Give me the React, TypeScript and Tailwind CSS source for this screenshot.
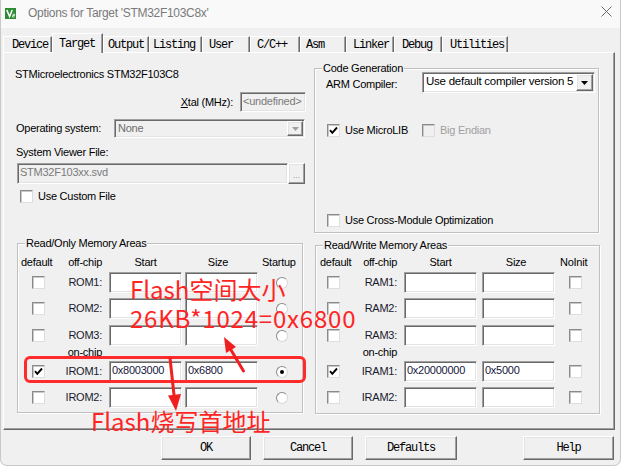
import React from "react";

const MONO = "font-['Liberation_Mono',monospace] text-[12px] tracking-[-1.2px]";
const SANS = "font-['Liberation_Sans',Arial,sans-serif]";
const sunken =
  "border border-t-[#a0a0a0] border-l-[#a0a0a0] border-r-white border-b-white shadow-[inset_1px_1px_0_#696969,inset_-1px_-1px_0_#e3e3e3]";
const raised =
  "border border-t-white border-l-white border-r-[#696969] border-b-[#696969] shadow-[inset_-1px_-1px_0_#a0a0a0,inset_1px_1px_0_#e3e3e3]";

function Check({ checked = false, disabled = false }: { checked?: boolean; disabled?: boolean }) {
  return (
    <span
      className={`flex items-center justify-center w-[13px] h-[13px] shrink-0 border border-t-[#8a8a8a] border-l-[#8a8a8a] border-r-[#dedede] border-b-[#dedede] shadow-[inset_1px_1px_0_#c8c8c8] ${
        disabled ? "bg-[#f0f0f0]" : "bg-white"
      }`}
    >
      {checked && (
        <svg width="9" height="9" viewBox="0 0 9 9">
          <path d="M1 4.2 L3.3 6.8 L8 1.5" fill="none" stroke="#000" strokeWidth="1.9" />
        </svg>
      )}
    </span>
  );
}

function Radio({ on = false }: { on?: boolean }) {
  return (
    <span className="flex items-center justify-center w-[12px] h-[12px] rounded-full bg-white border border-[#8a8a8a] border-r-[#d8d8d8] border-b-[#d8d8d8]">
      {on && <span className="block w-[4px] h-[4px] rounded-full bg-black" />}
    </span>
  );
}

function Field({ value = "", cls }: { value?: string; cls: string }) {
  return (
    <div className={`flex items-center pl-[2px] bg-white text-[#16163c] ${sunken} ${cls}`}>
      <span className="leading-[13px] -mt-[2px]">{value}</span>
    </div>
  );
}

function Legend({ children }: { children: React.ReactNode }) {
  return (
    <span className="absolute left-[7px] -top-[8px] px-[1px] bg-[#f0f0f0] leading-[14px]">{children}</span>
  );
}

const tabs = [
  { label: "Device", cls: "w-[49px] pl-[8px] h-[16px]" },
  { label: "Target", cls: "w-[51px] pl-[6px] h-[20px] -mb-[1px] bg-[#f0f0f0] z-10", sel: true },
  { label: "Output", cls: "w-[46px] pl-[4px] h-[16px]" },
  { label: "Listing", cls: "w-[53px] pl-[3px] h-[16px]" },
  { label: "User", cls: "w-[48px] pl-[6px] h-[16px]" },
  { label: "C/C++", cls: "w-[50px] pl-[6px] h-[16px]" },
  { label: "Asm", cls: "w-[46px] pl-[5px] h-[16px]" },
  { label: "Linker", cls: "w-[48px] pl-[6px] h-[16px]" },
  { label: "Debug", cls: "w-[48px] pl-[7px] h-[16px]" },
  { label: "Utilities", cls: "w-[66px] pl-[7px] h-[16px]" },
];

function RomRow({ label, start = "", size = "", checked = false, on = false }: { label: string; start?: string; size?: string; checked?: boolean; on?: boolean }) {
  return (
    <div className="flex items-center h-[21px]">
      <div className="w-[47px] pl-[14px]">
        <Check checked={checked} />
      </div>
      <div className="w-[37px] text-right text-[#1a1a2e]">{label}</div>
      <Field value={start} cls="ml-[7px] w-[73px] h-[21px]" />
      <Field value={size} cls="ml-[3px] w-[73px] h-[21px]" />
      <div className="ml-[18px]">
        <Radio on={on} />
      </div>
    </div>
  );
}

function RamRow({ label, start = "", size = "", checked = false }: { label: string; start?: string; size?: string; checked?: boolean }) {
  return (
    <div className="flex items-center h-[21px]">
      <div className="w-[44px] pl-[11px]">
        <Check checked={checked} />
      </div>
      <div className="w-[37px] text-right text-[#1a1a2e]">{label}</div>
      <Field value={start} cls="ml-[7px] w-[73px] h-[21px]" />
      <Field value={size} cls="ml-[5px] w-[73px] h-[21px]" />
      <div className="ml-[14px]">
        <Check />
      </div>
    </div>
  );
}

export default function App() {
  return (
    <div className={`relative w-[621px] h-[467px] bg-white overflow-hidden ${SANS} text-[11px] tracking-[-0.25px] text-black`}>
      <div className="w-[621px] h-[466px] bg-[#f0f0f0] rounded-b-[7px] border-b border-l border-r border-[#c8c8c8] flex flex-col">
        {/* Title bar */}
        <div className="h-[28px] bg-[#f9f9f9] flex items-start">
          <svg className="ml-[4px] mt-[8px]" width="11" height="11" viewBox="0 0 11 11">
            <rect width="11" height="11" fill="#2f8a35" />
            <path d="M1.8 2 L4.6 8.6 L7.2 2" fill="none" stroke="#fff" strokeWidth="1.5" />
            <path d="M7.6 6.2 h2 v1.3 h-2 v1.5 h2" fill="none" stroke="#fff" strokeWidth="0.8" />
          </svg>
          <span className="ml-[12px] mt-[5px] text-[12px] tracking-[-0.3px] leading-[16px] text-[#7a7a7a]">
            Options for Target 'STM32F103C8x'
          </span>
          <svg className="ml-auto mr-[8px] mt-[6px]" width="11" height="11" viewBox="0 0 11 11">
            <path d="M0.5 0.5 L10.5 10.5 M10.5 0.5 L0.5 10.5" stroke="#6a6a6a" strokeWidth="1" />
          </svg>
        </div>

        {/* Tabs */}
        <div className={`h-[24px] flex items-end pl-[2px] ${MONO}`}>
          {tabs.map((t) => (
            <div
              key={t.label}
              className={`relative flex items-center border-t border-l border-t-white border-l-white border-r border-r-[#696969] shadow-[inset_-1px_0_0_#a0a0a0] leading-[14px] text-black ${t.cls}`}
            >
              {t.label}
            </div>
          ))}
        </div>

        {/* Panel */}
        <div className="ml-[2px] w-[612px] h-[378px] flex border border-t-white border-l-white border-r-[#696969] border-b-[#696969] shadow-[inset_-1px_-1px_0_#a0a0a0]">
          {/* Left column */}
          <div className="w-[307px] flex flex-col">
            <div className="mt-[14px] ml-[11px] h-[14px] leading-[14px]">STMicroelectronics STM32F103C8</div>
            <div className="mt-[11px] h-[20px] flex items-center justify-end pr-[5px]">
              <span>
                <span className="underline">X</span>tal (MHz):
              </span>
              <div className={`ml-[7px] w-[66px] h-[20px] flex items-center pl-[2px] bg-[#f0f0f0] text-[#7a7a7a] ${sunken}`}>
                <span className="-mt-[2px]">&lt;undefined&gt;</span>
              </div>
            </div>
            <div className="mt-[7px] h-[19px] flex items-center">
              <span className="w-[110px] pl-[12px]">Operating system:</span>
              <div className={`w-[191px] h-[19px] flex items-center bg-[#f0f0f0] text-[#6d6d6d] ${sunken}`}>
                <span className="pl-[3px] flex-1">None</span>
                <span className={`w-[16px] h-[15px] mr-[1px] flex items-center justify-center bg-[#f0f0f0] ${raised}`}>
                  <svg width="7" height="4" viewBox="0 0 7 4">
                    <path d="M0 0 H7 L3.5 4 Z" fill="#a0a0a0" />
                  </svg>
                </span>
              </div>
            </div>
            <div className="mt-[7px] h-[14px] leading-[14px] pl-[12px]">System Viewer File:</div>
            <div className="mt-[4px] h-[21px] flex pl-[13px]">
              <div className={`w-[271px] h-[21px] flex items-center pl-[2px] bg-[#f0f0f0] text-[#7a7a7a] ${sunken}`}>
                <span className="-mt-[2px]">STM32F103xx.svd</span>
              </div>
              <div className={`w-[17px] h-[21px] flex items-end justify-center pb-[4px] text-[#a0a0a0] text-[9px] leading-[8px] ${raised}`}>
                ...
              </div>
            </div>
            <div className="mt-[6px] h-[13px] flex items-center pl-[16px] gap-[5px]">
              <Check />
              <span>Use Custom File</span>
            </div>

            {/* Read/Only Memory Areas */}
            <div className="relative mt-[40px] ml-[13px] w-[286px] h-[170px] border border-[#c0c0c0] shadow-[inset_1px_1px_0_#fff,1px_1px_0_#fff]">
              <Legend>Read/Only Memory Areas</Legend>
              <div className="mt-[11px] h-[14px] leading-[14px] flex">
                <span className="w-[47px] pl-[3px]">default</span>
                <span className="w-[37px] text-right">off-chip</span>
                <span className="ml-[7px] w-[73px] text-center">Start</span>
                <span className="ml-[3px] w-[66px] text-center">Size</span>
                <span className="ml-[11px]">Startup</span>
              </div>
              <div className="mt-[3px]">
                <RomRow label="ROM1:" />
              </div>
              <div className="mt-[5px]">
                <RomRow label="ROM2:" />
              </div>
              <div className="mt-[6px]">
                <RomRow label="ROM3:" />
              </div>
              <div className="h-[13px] leading-[13px] flex">
                <span className="w-[84px] text-right">on-chip</span>
              </div>
              <div className="mt-[2px]">
                <RomRow label="IROM1:" start="0x8003000" size="0x6800" checked on />
              </div>
              <div className="mt-[5px]">
                <RomRow label="IROM2:" />
              </div>
            </div>
          </div>

          {/* Right column */}
          <div className="flex-1 flex flex-col">
            <div className="relative mt-[15px] ml-[3px] w-[285px] h-[165px] border border-[#c0c0c0] shadow-[inset_1px_1px_0_#fff,1px_1px_0_#fff]">
              <Legend>Code Generation</Legend>
              <div className="mt-[3px] h-[21px] flex items-center pl-[11px]">
                <span className="w-[96px] mt-[3px]">ARM Compiler:</span>
                <div className={`w-[173px] h-[21px] flex items-center bg-white ${sunken}`}>
                  <span className="pl-[3px] flex-1 -mt-[2px] text-[11.5px]">Use default compiler version 5</span>
                  <span className={`w-[17px] h-[17px] mr-[1px] flex items-center justify-center bg-[#f0f0f0] ${raised}`}>
                    <svg width="7" height="4" viewBox="0 0 7 4">
                      <path d="M0 0 H7 L3.5 4 Z" fill="#000" />
                    </svg>
                  </span>
                </div>
              </div>
              <div className="mt-[31px] h-[13px] flex items-center pl-[12px]">
                <div className="w-[95px] flex items-center gap-[5px]">
                  <Check checked />
                  <span>Use MicroLIB</span>
                </div>
                <Check disabled />
                <span className="ml-[5px] text-[#a0a0a0]">
                  Bi<span className="underline">g</span> Endian
                </span>
              </div>
              <div className="mt-[77px] h-[13px] flex items-center pl-[12px] gap-[5px]">
                <Check />
                <span>Use Cross-Module Optimization</span>
              </div>
            </div>

            {/* Read/Write Memory Areas */}
            <div className="relative mt-[12px] ml-[4px] w-[285px] h-[169px] border border-[#c0c0c0] shadow-[inset_1px_1px_0_#fff,1px_1px_0_#fff]">
              <Legend>Read/Write Memory Areas</Legend>
              <div className="mt-[9px] h-[14px] leading-[14px] flex">
                <span className="w-[44px] pl-[4px]">default</span>
                <span className="w-[37px] text-right">off-chip</span>
                <span className="ml-[7px] w-[73px] text-center">Start</span>
                <span className="ml-[5px] w-[68px] text-center">Size</span>
                <span className="ml-[10px]">NoInit</span>
              </div>
              <div className="mt-[3px]">
                <RamRow label="RAM1:" />
              </div>
              <div className="mt-[5px]">
                <RamRow label="RAM2:" />
              </div>
              <div className="mt-[6px]">
                <RamRow label="RAM3:" />
              </div>
              <div className="h-[13px] leading-[13px] flex">
                <span className="w-[81px] text-right">on-chip</span>
              </div>
              <div className="mt-[2px]">
                <RamRow label="IRAM1:" start="0x20000000" size="0x5000" checked />
              </div>
              <div className="mt-[5px]">
                <RamRow label="IRAM2:" />
              </div>
            </div>
          </div>
        </div>

        {/* Buttons */}
        <div className={`mt-[6px] flex pl-[160px] ${MONO}`}>
          <div className={`w-[90px] h-[24px] flex items-center justify-center ${raised}`}>OK</div>
          <div className={`ml-[12px] w-[90px] h-[24px] flex items-center justify-center ${raised}`}>Cancel</div>
          <div className={`ml-[12px] w-[92px] h-[24px] flex items-center justify-center ${raised}`}>Defaults</div>
          <div className={`ml-[66px] w-[91px] h-[24px] flex items-center justify-center ${raised}`}>Help</div>
        </div>
      </div>

      {/* Annotations */}
      <div className="absolute left-[24px] top-[356px] w-[282px] h-[27px] border-[3px] border-[#ff2a2a] rounded-[6px]" />
      <span className="absolute left-[130px] top-[277px] text-[24px] leading-[24px] tracking-normal text-[#ff2424] font-['Noto_Sans_CJK_SC',sans-serif] whitespace-nowrap">
        Flash空间大小
      </span>
      <span className="absolute left-[130px] top-[306px] text-[24px] leading-[24px] tracking-[0.8px] text-[#ff2424] font-['Noto_Sans_CJK_SC',sans-serif] whitespace-nowrap">
        26KB*1024=0x6800
      </span>
      <span className="absolute left-[91px] top-[409px] text-[24px] leading-[24px] tracking-normal text-[#ff2424] font-['Noto_Sans_CJK_SC',sans-serif] whitespace-nowrap">
        Flash烧写首地址
      </span>
      <svg className="absolute left-0 top-0 pointer-events-none" width="621" height="467" viewBox="0 0 621 467">
        <path d="M243.5 371 L231 350" stroke="#f02020" strokeWidth="3" strokeLinecap="round" />
        <polygon points="224,337 236,347 226,353" fill="#f02020" />
        <path d="M170 358 L174 395" stroke="#f02020" strokeWidth="3" strokeLinecap="round" />
        <polygon points="176,411 181,394 168,395.5" fill="#f02020" />
      </svg>
    </div>
  );
}
